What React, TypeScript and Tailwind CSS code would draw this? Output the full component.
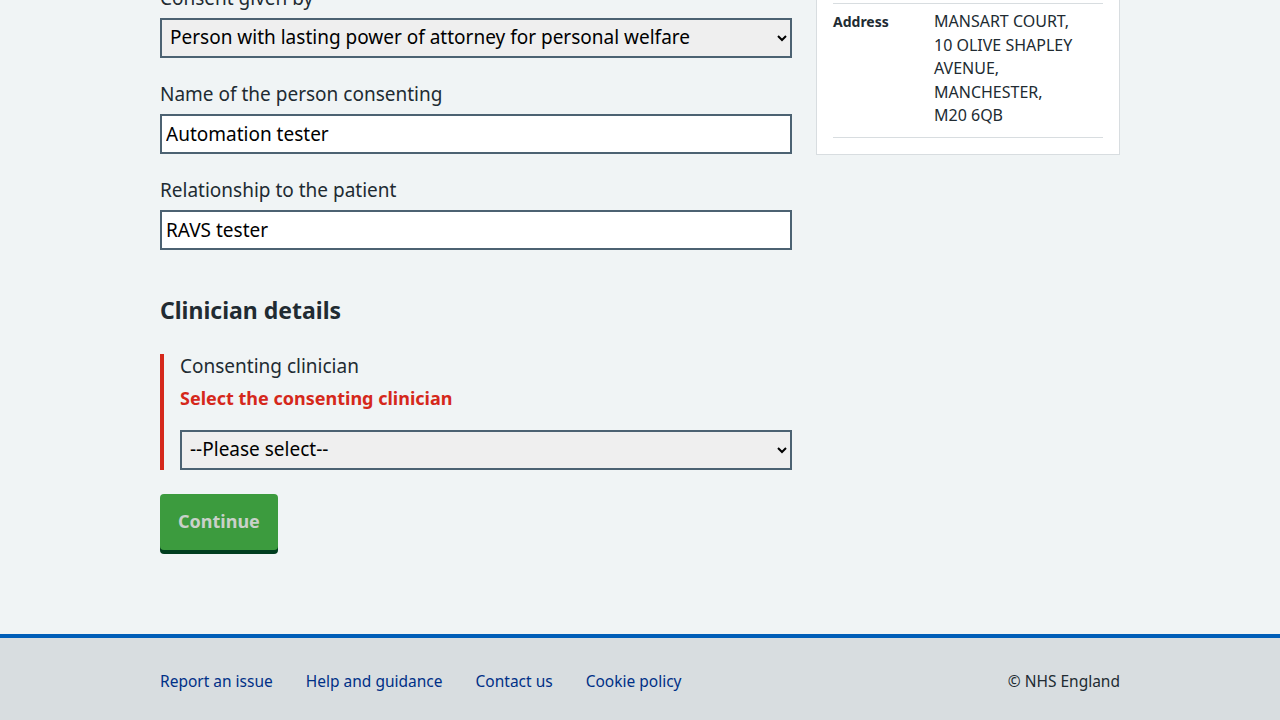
import React from "react";

const font = { fontFamily: '"Noto Sans", Arial, sans-serif' };

function Field({ label, value }: { label: string; value: string }) {
  return (
    <div className="mb-6">
      <label className="mb-2 block text-[19px] leading-[24px] text-[#212b32]">{label}</label>
      <input
        readOnly
        value={value}
        className="block h-10 w-full border-2 border-[#4c6272] bg-white px-1 text-[19px] text-black outline-none"
      />
    </div>
  );
}

function SelectBox({ value }: { value: string }) {
  return (
    <select
      value={value}
      onChange={() => {}}
      className="block h-10 w-full border-2 border-[#4c6272] bg-[#efefef] px-1 pb-[3px] text-[19px] text-black"
    >
      <option>{value}</option>
    </select>
  );
}

export default function App() {
  return (
    <div className="min-h-screen overflow-hidden bg-[#f0f4f5] text-[#212b32]" style={font}>
      <main className="mx-auto flex w-[960px] gap-6 pb-[84px]">
        <div className="-mt-[14px] w-[632px]">
          <div className="mb-6">
            <label className="mb-2 block text-[19px] leading-[24px]">Consent given by</label>
            <SelectBox value="Person with lasting power of attorney for personal welfare" />
          </div>
          <Field label="Name of the person consenting" value="Automation tester" />
          <Field label="Relationship to the patient" value="RAVS tester" />

          <h2 className="mt-[44px] mb-7 text-[23px] font-bold leading-[32px]">Clinician details</h2>

          <div className="border-l-4 border-[#d5281b] pl-4">
            <label className="block pb-1 text-[19px] leading-[24px]">Consenting clinician</label>
            <p className="mb-5 mt-1 text-[18px] font-bold leading-[24px] text-[#d5281b]">
              Select the consenting clinician
            </p>
            <SelectBox value="--Please select--" />
          </div>

          <button className="mt-6 rounded-[4px] bg-[#3c9b3e] px-[18px] pb-[15px] pt-[13px] text-[18px] font-bold leading-[28px] text-[#c9d1c9] shadow-[0_4px_0_#003d1f]">
            Continue
          </button>
        </div>

        <aside className="-mt-[20px] w-[304px] self-start">
          <div className="border border-[#d8dde0] bg-white px-4 pb-4 pt-[22px]">
            <div className="flex border-y border-[#d8dde0] pb-[9px] pt-[6px]">
              <div className="w-[101px] text-[14px] font-bold leading-[24px]">Address</div>
              <div className="text-[16px] leading-[23.5px]">
                MANSART COURT,
                <br />
                10 OLIVE SHAPLEY
                <br />
                AVENUE,
                <br />
                MANCHESTER,
                <br />
                M20 6QB
              </div>
            </div>
          </div>
        </aside>
      </main>

      <footer className="border-t-4 border-[#005eb8] bg-[#d8dde0] pb-10 pt-[31px]">
        <div className="mx-auto flex w-[960px] items-center justify-between text-[15.5px] leading-[24px]">
          <ul className="flex gap-[33px] text-[#003087]">
            <li>Report an issue</li>
            <li>Help and guidance</li>
            <li>Contact us</li>
            <li>Cookie policy</li>
          </ul>
          <p>© NHS England</p>
        </div>
      </footer>
    </div>
  );
}
